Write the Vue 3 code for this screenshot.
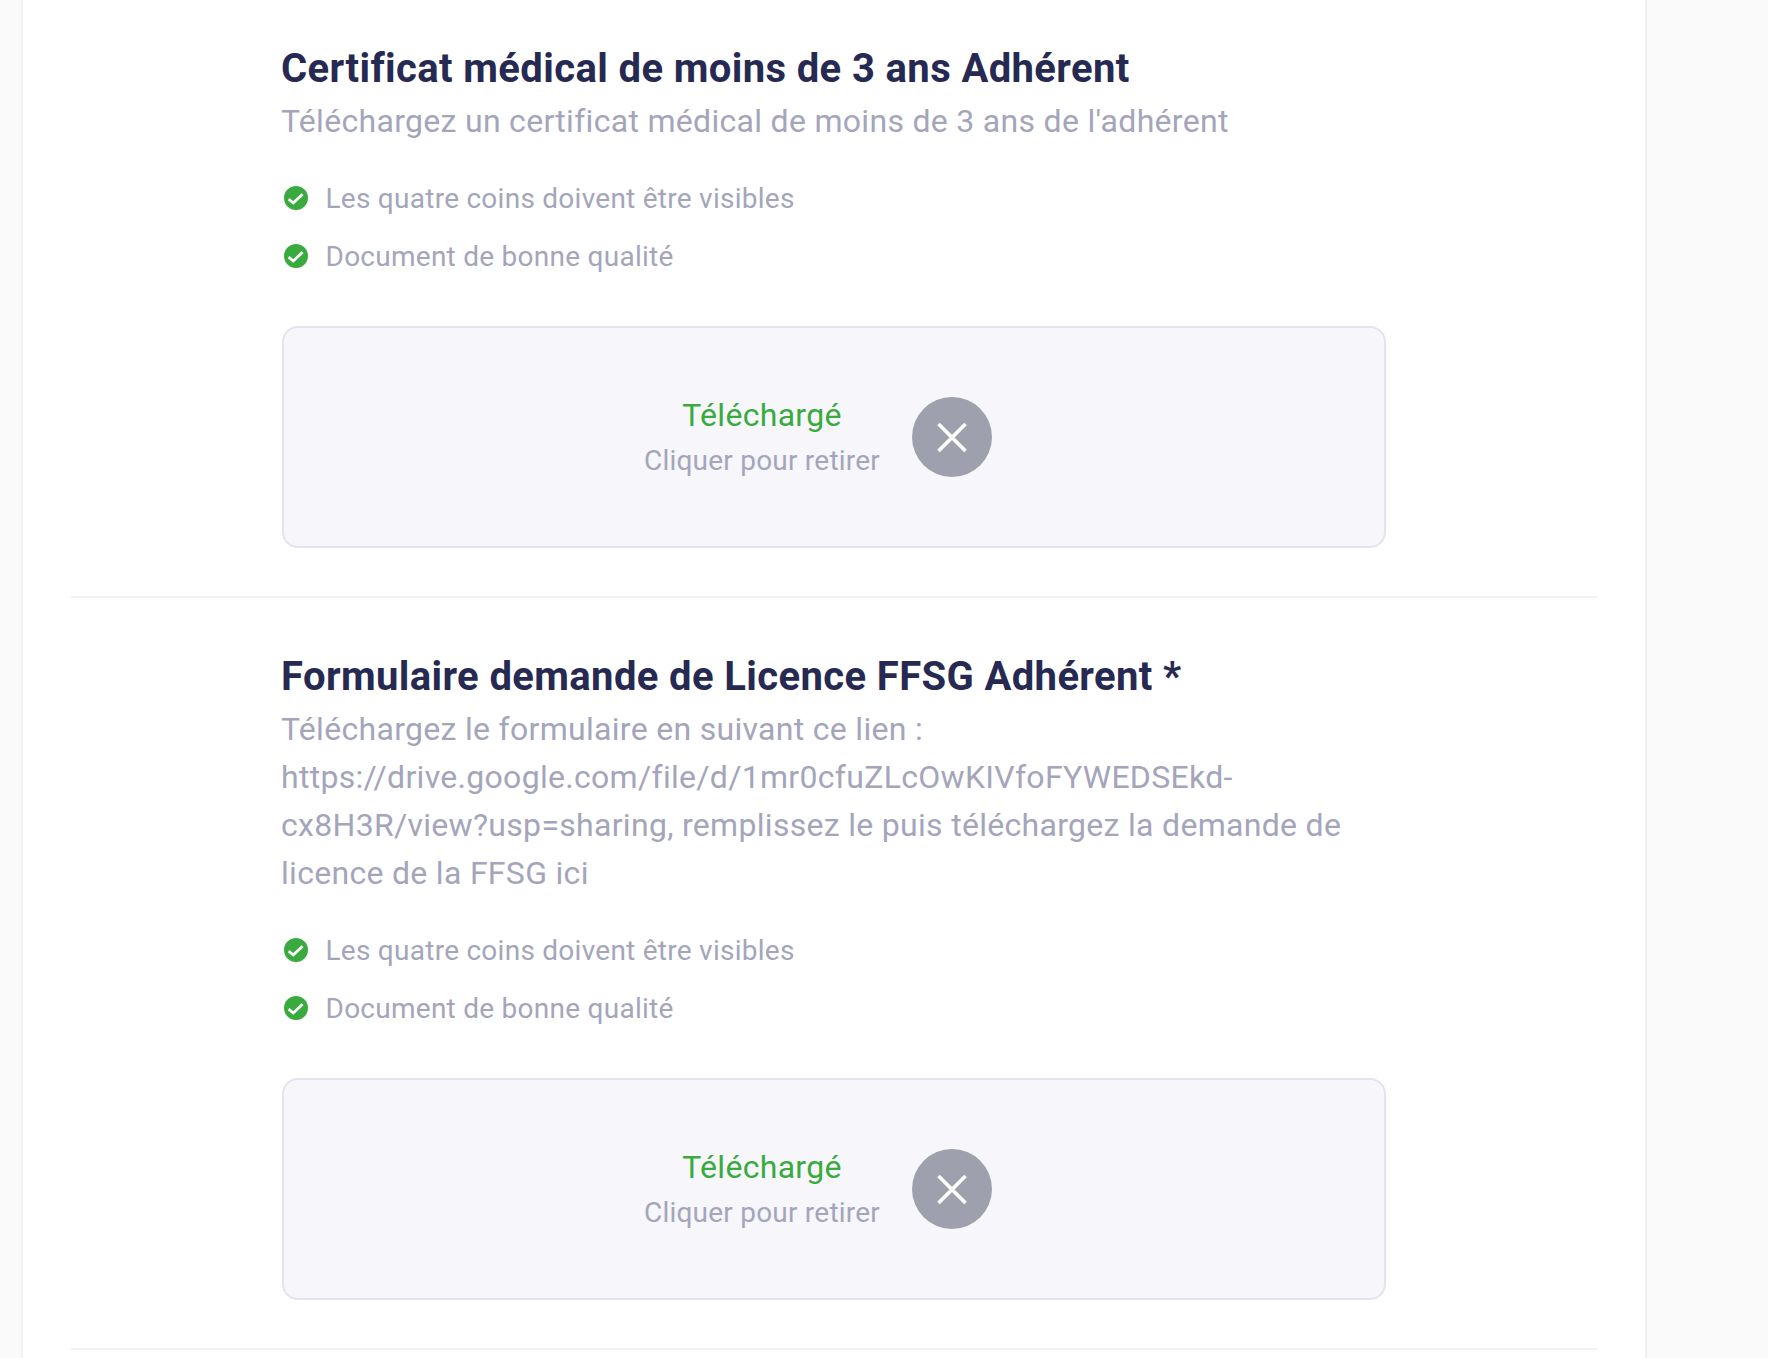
<script setup>
const checks = ['Les quatre coins doivent être visibles', 'Document de bonne qualité']
const sections = [
  {
    title: 'Certificat médical de moins de 3 ans Adhérent',
    desc: "Téléchargez un certificat médical de moins de 3 ans de l'adhérent",
  },
  {
    title: 'Formulaire demande de Licence FFSG Adhérent *',
    desc: 'Téléchargez le formulaire en suivant ce lien : https://drive.google.com/file/d/1mr0cfuZLcOwKIVfoFYWEDSEkd-cx8H3R/view?usp=sharing, remplissez le puis téléchargez la demande de licence de la FFSG ici',
  },
]
</script>

<template>
  <div class="page">
    <main class="card">
      <section v-for="s in sections" :key="s.title" class="section">
        <div class="inner">
          <h2 class="title">{{ s.title }}</h2>
          <p class="desc">{{ s.desc }}</p>
          <ul class="checks">
            <li v-for="c in checks" :key="c" class="check">
              <svg class="tick" viewBox="0 0 24 24" aria-hidden="true">
                <circle cx="12" cy="12" r="12" fill="#3aaa3f" />
                <path d="M4.600 13.200L9.200 17L18.600 8.200" fill="none" stroke="#fff" stroke-width="2.800" />
              </svg>
              <span>{{ c }}</span>
            </li>
          </ul>
          <div class="drop">
            <div class="status">
              <div class="done">Téléchargé</div>
              <div class="hint">Cliquer pour retirer</div>
            </div>
            <div class="remove">
              <svg viewBox="0 0 80 80" aria-hidden="true">
                <path d="M26.500 27l27 27M53.500 27l-27 27" fill="none" stroke="#fff" stroke-width="3.600" />
              </svg>
            </div>
          </div>
        </div>
      </section>
    </main>
  </div>
</template>

<style>
html, body { margin: 0; background: #fafafa; }
</style>

<style scoped>
.page {
  height: 1358px;
  overflow: hidden;
  background: #fafafa;
  font-family: Roboto, "Liberation Sans", sans-serif;
}
.card {
  box-sizing: border-box;
  width: 1626px;
  min-height: 1358px;
  margin-left: 21px;
  padding: 0 48px;
  background: #fff;
  border-left: 2px solid #f0f0f8;
  border-right: 2px solid #f0f0f8;
}
.section {
  border-bottom: 2px solid #f0f0f8;
  padding: 47px 0 48px;
}
.section + .section { padding-top: 57px; }
.inner {
  margin-left: 211px;
  width: 1104px;
}
.title {
  margin: 0 0 0 -1px;
  font-size: 40px;
  line-height: 44px;
  font-weight: 700;
  letter-spacing: 0.38px;
  color: #262a52;
}
.desc {
  margin: 6px 0 0 -1px;
  font-size: 32px;
  line-height: 48px;
  color: #a4a5bb;
  letter-spacing: 0.3px;
}
.checks {
  list-style: none;
  margin: 33px 0 0;
  padding: 0;
  display: flex;
  flex-direction: column;
  gap: 18px;
}
.check {
  display: flex;
  align-items: center;
  height: 40px;
  gap: 17.500px;
  padding-left: 2px;
  font-size: 28px;
  letter-spacing: 0.26px;
  color: #a4a5bb;
}
.tick { width: 24px; height: 24px; flex: none; }
.drop {
  box-sizing: border-box;
  height: 222px;
  margin-top: 50px;
  padding-right: 32px;
  display: flex;
  align-items: center;
  justify-content: center;
  gap: 32px;
  background: #f6f6fb;
  border: 2px solid #e2e4ee;
  border-radius: 16px;
}
.status { text-align: center; padding-top: 3px; }
.done { font-size: 32px; line-height: 44px; letter-spacing: 0.3px; color: #3aaa3f; }
.hint { margin-top: 1px; font-size: 28px; line-height: 46px; letter-spacing: 0.22px; color: #a4a5bb; }
.remove {
  width: 80px;
  height: 80px;
  border-radius: 50%;
  background: #9ea1ad;
}
.remove svg { display: block; width: 80px; height: 80px; }
</style>
